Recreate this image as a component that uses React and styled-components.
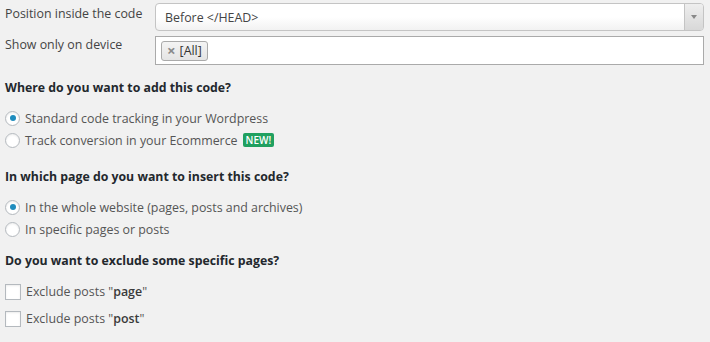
import styled, { createGlobalStyle } from "styled-components";

const GlobalStyle = createGlobalStyle`
  html, body {
    margin: 0;
    padding: 0;
    background: #f1f1f1;
  }
  body {
    font-family: "Open Sans", "Noto Sans", Arial, sans-serif;
    color: #444;
  }
`;

const Page = styled.div`
  width: 710px;
  height: 342px;
  box-sizing: border-box;
  padding: 3px 6px 0 5px;
  font-size: 12.4px;
`;

const FieldRow = styled.div`
  display: grid;
  grid-template-columns: 150px 1fr;
  align-items: start;
  margin-bottom: 5px;
`;

const FieldLabel = styled.div`
  line-height: 18px;
  padding-top: ${(p) => p.$top ?? 4}px;
`;

const SelectBox = styled.div`
  height: 28px;
  box-sizing: border-box;
  border: 1px solid #c4c4c4;
  border-radius: 4px;
  background: linear-gradient(#ffffff 50%, #f2f2f2);
  display: flex;
  align-items: center;
  overflow: hidden;
`;

const SelectValue = styled.span`
  flex: 1;
  padding-left: 9px;
  color: #444;
`;

const SelectArrow = styled.span`
  width: 18px;
  align-self: stretch;
  border-left: 1px solid #c4c4c4;
  background: linear-gradient(#eeeeee, #d8d8d8);
  display: flex;
  align-items: center;
  justify-content: center;

  &::after {
    content: "";
    border-left: 3px solid transparent;
    border-right: 3px solid transparent;
    border-top: 4px solid #888;
  }
`;

const TagInput = styled.div`
  height: 29px;
  box-sizing: border-box;
  border: 1px solid #aaa;
  background: #fff;
  display: flex;
  align-items: center;
  padding-left: 5px;
`;

const Tag = styled.span`
  display: inline-flex;
  align-items: center;
  gap: 4px;
  height: 20px;
  box-sizing: border-box;
  padding: 0 5px 0 5px;
  border: 1px solid #aaa;
  border-radius: 3px;
  background: linear-gradient(#f4f4f4, #e4e4e4);
  color: #333;
`;

const TagRemove = styled.span`
  color: #8a8a8a;
  font-weight: 700;
  font-size: 15px;
  line-height: 1;
`;

const Section = styled.div`
  margin-top: ${(p) => p.$top}px;
`;

const Heading = styled.h3`
  margin: 0 0 ${(p) => p.$gap ?? 10}px;
  font-size: 12.3px;
  font-weight: 700;
  line-height: 18px;
  color: #23282d;
`;

const Option = styled.label`
  display: flex;
  align-items: center;
  gap: 5px;
  height: 22px;
  color: #555;
`;

const Radio = styled.span`
  width: 15px;
  height: 15px;
  box-sizing: border-box;
  border-radius: 50%;
  border: 1px solid #b4b9be;
  background: #fff;
  box-shadow: inset 0 1px 2px rgba(0, 0, 0, 0.08);
  display: flex;
  align-items: center;
  justify-content: center;

  &::after {
    content: "";
    display: ${(p) => (p.$checked ? "block" : "none")};
    width: 6px;
    height: 6px;
    border-radius: 50%;
    background: #1e8cbe;
  }
`;

const Checkbox = styled.span`
  width: 16px;
  height: 16px;
  box-sizing: border-box;
  border: 1px solid #b4b9be;
  background: #fff;
  box-shadow: inset 0 1px 2px rgba(0, 0, 0, 0.08);
`;

const CheckOption = styled(Option)`
  height: 27px;
`;

const Strong = styled.span`
  font-weight: 600;
  color: #3a3a3a;
`;

const Badge = styled.span`
  background: #20a060;
  color: #fff;
  font-size: 10px;
  font-weight: 600;
  line-height: 14px;
  padding: 0 3px;
  border-radius: 2px;
`;

export default function App() {
  return (
    <>
      <GlobalStyle />
      <Page>
        <FieldRow>
          <FieldLabel $top={2}>Position inside the code</FieldLabel>
          <SelectBox>
            <SelectValue>Before &lt;/HEAD&gt;</SelectValue>
            <SelectArrow />
          </SelectBox>
        </FieldRow>
        <FieldRow>
          <FieldLabel $top={0}>Show only on device</FieldLabel>
          <TagInput>
            <Tag>
              <TagRemove>×</TagRemove>[All]
            </Tag>
          </TagInput>
        </FieldRow>

        <Section $top={14}>
          <Heading>Where do you want to add this code?</Heading>
          <Option>
            <Radio $checked />
            Standard code tracking in your Wordpress
          </Option>
          <Option>
            <Radio />
            Track conversion in your Ecommerce <Badge>NEW!</Badge>
          </Option>
        </Section>

        <Section $top={17}>
          <Heading>In which page do you want to insert this code?</Heading>
          <Option>
            <Radio $checked />
            In the whole website (pages, posts and archives)
          </Option>
          <Option>
            <Radio />
            In specific pages or posts
          </Option>
        </Section>

        <Section $top={12}>
          <Heading $gap={8}>Do you want to exclude some specific pages?</Heading>
          <CheckOption>
            <Checkbox />
            <span>
              Exclude posts "<Strong>page</Strong>"
            </span>
          </CheckOption>
          <CheckOption>
            <Checkbox />
            <span>
              Exclude posts "<Strong>post</Strong>"
            </span>
          </CheckOption>
        </Section>
      </Page>
    </>
  );
}
